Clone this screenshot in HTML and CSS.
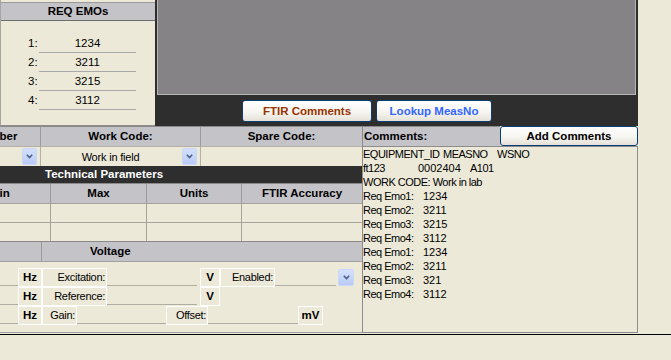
FILE: index.html
```html
<!DOCTYPE html>
<html>
<head>
<meta charset="utf-8">
<title>FTIR</title>
<link rel="stylesheet" href="styles.css">
</head>
<body>
<div class="app">
  <div class="top">
    <section class="emo">
      <div class="emo-head">REQ EMOs</div>
      <ol class="emo-list">
        <li class="emo-row"><span class="emo-num">1:</span><span class="emo-val">1234</span></li>
        <li class="emo-row"><span class="emo-num">2:</span><span class="emo-val">3211</span></li>
        <li class="emo-row"><span class="emo-num">3:</span><span class="emo-val">3215</span></li>
        <li class="emo-row"><span class="emo-num">4:</span><span class="emo-val">3112</span></li>
      </ol>
    </section>
    <section class="viewer">
      <div class="screen"></div>
      <div class="actions">
        <button class="btn btn-ftir">FTIR Comments</button>
        <button class="btn btn-lookup">Lookup MeasNo</button>
      </div>
    </section>
    <div class="fill"></div>
  </div>

  <div class="main">
    <section class="form">
      <div class="grid3 hdr">
        <div class="cell cut-num">Number</div>
        <div class="cell">Work Code:</div>
        <div class="cell">Spare Code:</div>
      </div>
      <div class="grid3 inrow">
        <div class="cell cell-end">
          <span class="dd"><svg width="7" height="5" viewBox="0 0 7 5"><path d="M0.8 0.8 L3.5 3.5 L6.2 0.8" fill="none" stroke="#4d6185" stroke-width="1.6"/></svg></span>
        </div>
        <div class="cell combo">
          <span class="combo-text">Work in field</span>
          <span class="dd"><svg width="7" height="5" viewBox="0 0 7 5"><path d="M0.8 0.8 L3.5 3.5 L6.2 0.8" fill="none" stroke="#4d6185" stroke-width="1.6"/></svg></span>
        </div>
        <div class="cell"></div>
      </div>
      <div class="bar">Technical Parameters</div>
      <div class="grid4 hdr">
        <div class="cell cut-min">Min</div>
        <div class="cell">Max</div>
        <div class="cell">Units</div>
        <div class="cell">FTIR Accuracy</div>
      </div>
      <div class="grid4 drow">
        <div class="cell"></div><div class="cell"></div><div class="cell"></div><div class="cell"></div>
      </div>
      <div class="grid4 drow">
        <div class="cell"></div><div class="cell"></div><div class="cell"></div><div class="cell"></div>
      </div>
      <div class="vhdr hdr">
        <div class="cell"></div>
        <div class="cell vtitle">Voltage</div>
      </div>
      <div class="fields">
        <div class="frow">
          <span class="inp w18"></span>
          <span class="lbl unit w24">Hz</span>
          <span class="lbl w65">Excitation:</span>
          <span class="inp w90"></span>
          <span class="lbl unit w20 gap3">V</span>
          <span class="lbl w55">Enabled:</span>
          <span class="inp w61"></span>
          <span class="dd dd-enabled"><svg width="7" height="5" viewBox="0 0 7 5"><path d="M0.8 0.8 L3.5 3.5 L6.2 0.8" fill="none" stroke="#4d6185" stroke-width="1.6"/></svg></span>
        </div>
        <div class="frow">
          <span class="inp w18"></span>
          <span class="lbl unit w24">Hz</span>
          <span class="lbl w65">Reference:</span>
          <span class="inp w90"></span>
          <span class="lbl unit w20 gap3">V</span>
        </div>
        <div class="frow">
          <span class="inp w18"></span>
          <span class="lbl unit w24">Hz</span>
          <span class="lbl w35">Gain:</span>
          <span class="inp w89"></span>
          <span class="lbl w42">Offset:</span>
          <span class="inp w90"></span>
          <span class="lbl unit w25">mV</span>
        </div>
      </div>
    </section>

    <section class="comments">
      <div class="c-head">
        <div class="c-title">Comments:</div>
        <button class="btn btn-add">Add Comments</button>
      </div>
      <div class="c-body">
        <div class="c-line"><span class="c-id">EQUIPMENT_ID</span><span class="c-meas">MEASNO</span><span>WSNO</span></div>
        <div class="c-line"><span class="c-ft">ft123</span><span class="c-no">0002404</span><span>A101</span></div>
        <div class="c-line">WORK CODE: Work in lab</div>
        <div class="c-line"><span class="c-req">Req Emo1:</span><span class="c-num">1234</span></div>
        <div class="c-line"><span class="c-req">Req Emo2:</span><span class="c-num">3211</span></div>
        <div class="c-line"><span class="c-req">Req Emo3:</span><span class="c-num">3215</span></div>
        <div class="c-line"><span class="c-req">Req Emo4:</span><span class="c-num">3112</span></div>
        <div class="c-line"><span class="c-req">Req Emo1:</span><span class="c-num">1234</span></div>
        <div class="c-line"><span class="c-req">Req Emo2:</span><span class="c-num">3211</span></div>
        <div class="c-line"><span class="c-req">Req Emo3:</span><span class="c-num">321</span></div>
        <div class="c-line"><span class="c-req">Req Emo4:</span><span class="c-num">3112</span></div>
      </div>
    </section>
    <div class="fill"></div>
  </div>

  <div class="footer"></div>
</div>
</body>
</html>
```

FILE: styles.css
```css
* { box-sizing: border-box; margin: 0; padding: 0; }

html, body { width: 671px; height: 360px; overflow: hidden; }

body {
  background: #ece9d8;
  font-family: "Liberation Sans", Arial, sans-serif;
  font-size: 11px;
  color: #000;
}

.app { display: flex; flex-direction: column; height: 360px; }

/* ---------- top strip ---------- */
.top { display: flex; height: 126px; }

.emo {
  width: 155px;
  padding-top: 2px;
  border-left: 1px solid #a5a5a5;
  border-bottom: 1px solid #8e8e8e;
}
.emo-head {
  height: 19px;
  border-top: 1px solid #9a9a9a;
  border-bottom: 1px solid #6e6e6e;
  background: #c4c3c8;
  font-weight: bold;
  font-size: 11.5px;
  line-height: 17px;
  text-align: center;
}
.emo-list { list-style: none; padding: 13px 0 0 27px; }
.emo-row { display: flex; height: 19px; line-height: 18px; font-size: 11.5px; }
.emo-num { width: 11px; }
.emo-val { width: 97px; border-bottom: 1px solid #a9a9a9; text-align: center; }

.viewer {
  width: 483px;
  background: #2e2e2e;
  padding: 0 2px;
  display: flex;
  flex-direction: column;
}
.screen {
  height: 95px;
  background: #858386;
  border: 1px solid #b6b6b6;
  border-top: 0;
}
.actions { display: flex; gap: 4px; padding: 5px 0 0 85px; }

.btn {
  font-family: "Liberation Sans", Arial, sans-serif;
  font-weight: bold;
  font-size: 11.5px;
  border: 1px solid #0a3d7a;
  border-radius: 3px;
  background: linear-gradient(#ffffff, #f6f5f1 55%, #e4e1d6);
  color: #000;
  cursor: default;
}
.btn-ftir { width: 130px; height: 22px; color: #993300; }
.btn-lookup { width: 116px; height: 22px; color: #3366ff; }
.btn-add { width: 138px; height: 20px; }

.fill { flex: 1; }

/* ---------- main ---------- */
.main { display: flex; height: 207px; }

.form { width: 362px; display: flex; flex-direction: column; }

.grid3 { display: grid; grid-template-columns: 41px 160px 161px; }
.grid4 { display: grid; grid-template-columns: 51px 96px 95px 120px; }

.cell {
  border-right: 1px solid #9b9b9b;
  overflow: hidden;
  white-space: nowrap;
}
.cell:last-child { border-right: 0; }

.hdr {
  height: 20px;
  background: #c4c3c8;
  border-top: 1px solid #8a8a8a;
  font-weight: bold;
  font-size: 11.5px;
  line-height: 19px;
  text-align: center;
}
.cut-num { text-align: left; text-indent: -26px; }
.cut-min { text-align: left; text-indent: -10px; }

.inrow { height: 20px; border-top: 1px solid #b3b0a5; }
.inrow .cell { border-right-color: #b3b0a5; display: flex; align-items: center; }
.cell-end { justify-content: flex-end; padding-right: 3px; }
.combo { padding-right: 3px; }
.combo-text { flex: 1; text-align: center; letter-spacing: -0.2px; padding-right: 2px; }

.dd {
  width: 15px;
  height: 17px;
  display: inline-flex;
  align-items: center;
  justify-content: center;
  background: linear-gradient(#d4e0fc, #b9cbf6);
  border: 1px solid #c9d7fb;
  border-radius: 2px;
}
.dd-enabled { margin: 1px 0 0 2px; width: 16px; }

.bar {
  height: 17px;
  background: #2e2e2e;
  color: #fff;
  font-weight: bold;
  font-size: 11.5px;
  line-height: 17px;
  padding-left: 45px;
}

.drow { height: 19px; border-top: 1px solid #a6a39a; }
.drow .cell { border-right-color: #a6a39a; }

.vhdr { display: grid; grid-template-columns: 42px 1fr; }
.vtitle { text-align: left; padding-left: 48px; }

.fields {
  flex: 1;
  border-top: 1px solid #a0a0a0;
  border-bottom: 1px solid #a0a0a0;
  padding-top: 6px;
}
.frow { display: flex; height: 19px; }
.lbl {
  height: 19px;
  border: 1px solid #fff;
  line-height: 17px;
  text-align: right;
  padding-right: 1px;
  white-space: nowrap;
  letter-spacing: -0.3px;
}
.unit { font-weight: bold; font-size: 11.5px; text-align: center; padding-right: 0; letter-spacing: 0; }
.inp { height: 18px; border-bottom: 1px solid #b0ada2; }
.gap3 { margin-left: 3px; }

.w18 { width: 18px; }
.w20 { width: 20px; }
.w24 { width: 24px; }
.w25 { width: 25px; }
.w35 { width: 35px; }
.w42 { width: 42px; }
.w55 { width: 55px; }
.w61 { width: 61px; }
.w65 { width: 65px; }
.w89 { width: 89px; }
.w90 { width: 90px; }

/* ---------- comments ---------- */
.comments { width: 276px; display: flex; flex-direction: column; }
.c-head { display: flex; height: 20px; }
.c-title {
  width: 138px;
  background: #c4c3c8;
  border-top: 1px solid #8a8a8a;
  border-left: 1px solid #8a8a8a;
  font-weight: bold;
  font-size: 11.5px;
  line-height: 19px;
  padding-left: 1px;
}
.c-body {
  flex: 1;
  border: 1px solid #8c8c8c;
  line-height: 14px;
  white-space: nowrap;
  letter-spacing: -0.5px;
}
.c-line span { display: inline-block; }
.c-num { letter-spacing: 0; }
.c-id { width: 80px; }
.c-meas { width: 54px; }
.c-ft { width: 55px; }
.c-no { width: 52px; letter-spacing: 0; }
.c-req { width: 60px; }

.footer { flex: 1; margin-top: 1px; border-top: 1px solid #000; }
```
